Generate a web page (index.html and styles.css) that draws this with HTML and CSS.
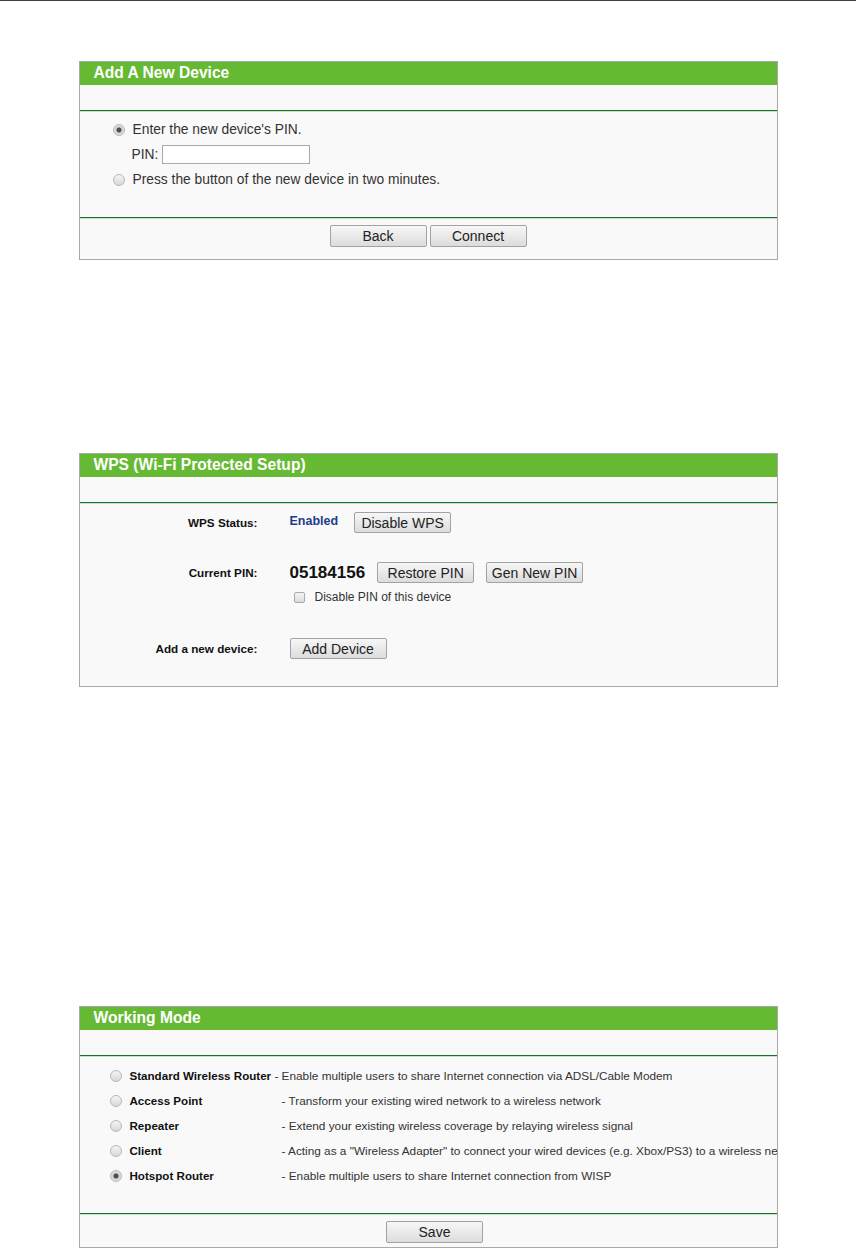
FILE: index.html
```html
<!DOCTYPE html>
<html lang="en">
<head>
  <meta charset="utf-8">
  <title>Wireless Router Setup</title>
  <link rel="stylesheet" href="styles.css">
</head>
<body>

  <section class="panel panel-add">
    <h2 class="panel-title">Add A New Device</h2>
    <div class="panel-band"></div>
    <div class="panel-body add-body">
      <label class="choice"><input class="radio" type="radio" name="method" checked>Enter the new device's PIN.</label>
      <div class="pin-row">PIN: <input class="pin-input" type="text"></div>
      <label class="choice"><input class="radio" type="radio" name="method">Press the button of the new device in two minutes.</label>
    </div>
    <div class="panel-foot">
      <button class="btn">Back</button>
      <button class="btn">Connect</button>
    </div>
  </section>

  <section class="panel panel-wps">
    <h2 class="panel-title">WPS (Wi-Fi Protected Setup)</h2>
    <div class="panel-band"></div>
    <div class="panel-body wps-body">
      <div class="field field-status">
        <span class="field-label">WPS Status:</span>
        <span class="status">Enabled</span>
        <button class="btn">Disable WPS</button>
      </div>
      <div class="field field-pin">
        <span class="field-label">Current PIN:</span>
        <span class="pin-code">05184156</span>
        <button class="btn">Restore PIN</button>
        <button class="btn">Gen New PIN</button>
      </div>
      <label class="check-row"><input class="check" type="checkbox">Disable PIN of this device</label>
      <div class="field field-add">
        <span class="field-label">Add a new device:</span>
        <button class="btn">Add Device</button>
      </div>
    </div>
  </section>

  <section class="panel panel-mode">
    <h2 class="panel-title">Working Mode</h2>
    <div class="panel-band"></div>
    <div class="panel-body mode-body">
      <label class="mode"><input class="radio" type="radio" name="mode"><b class="mode-name mode-name-free">Standard Wireless Router</b> - Enable multiple users to share Internet connection via ADSL/Cable Modem</label>
      <label class="mode"><input class="radio" type="radio" name="mode"><b class="mode-name">Access Point</b>- Transform your existing wired network to a wireless network</label>
      <label class="mode"><input class="radio" type="radio" name="mode"><b class="mode-name">Repeater</b>- Extend your existing wireless coverage by relaying wireless signal</label>
      <label class="mode"><input class="radio" type="radio" name="mode"><b class="mode-name">Client</b>- Acting as a "Wireless Adapter" to connect your wired devices (e.g. Xbox/PS3) to a wireless network</label>
      <label class="mode"><input class="radio" type="radio" name="mode" checked><b class="mode-name">Hotspot Router</b>- Enable multiple users to share Internet connection from WISP</label>
    </div>
    <div class="panel-foot panel-foot-save">
      <button class="btn">Save</button>
    </div>
  </section>

</body>
</html>
```

FILE: styles.css
```css
html, body {
  background: #fff;
}

body {
  margin: 0;
  border-top: 1px solid #404040;
  font-family: "Liberation Sans", Arial, sans-serif;
  color: #333;
}

.panel {
  box-sizing: border-box;
  width: 699px;
  margin: 0 auto;
  border: 1px solid #a9a9a9;
  background: #f9f9f9;
  overflow: hidden;
}

.panel-add {
  margin-top: 60px;
}

.panel-wps {
  margin-top: 193px;
}

.panel-mode {
  margin-top: 319px;
}

.panel-title {
  margin: 0;
  height: 23px;
  line-height: 21px;
  padding-left: 14px;
  background: #66b933;
  color: #fff;
  font-size: 15.6px;
  font-weight: bold;
}

.panel-band {
  height: 25px;
}

.panel-body,
.panel-foot {
  border-top: 1px solid #1c6f31;
  box-shadow: inset 0 1px 0 #c4e2c4;
}

/* buttons */
.btn {
  box-sizing: border-box;
  width: 97px;
  height: 22px;
  padding: 0;
  border: 1px solid #a2a2a2;
  border-radius: 2px;
  background: linear-gradient(#f7f7f7, #dcdcdc);
  color: #222;
  font-family: inherit;
  font-size: 14px;
}

.panel-foot {
  display: flex;
  justify-content: center;
  gap: 3px;
  padding: 7px 0 12px;
}

.panel-foot-save {
  padding: 7px 0 4px 13px;
}

/* radio + checkbox */
.radio {
  appearance: none;
  flex: none;
  width: 12px;
  height: 12px;
  margin: 0 7px 0 0;
  border: 1px solid #b8b8b8;
  border-radius: 50%;
  box-sizing: border-box;
  background: linear-gradient(#f5f5f5, #d8d8d8);
}

.radio:checked {
  background: radial-gradient(circle, #4d4d4d 0, #4d4d4d 2px, #cfcfcf 3px, #ececec 6px);
}

.check {
  appearance: none;
  flex: none;
  width: 11px;
  height: 11px;
  margin: 0 10px 0 0;
  border: 1px solid #a9a9a9;
  border-radius: 2px;
  box-sizing: border-box;
  background: linear-gradient(#f6f6f6, #dadada);
}

/* add a new device */
.add-body {
  padding: 6px 0 25px;
  font-size: 13.8px;
}

.choice {
  display: flex;
  align-items: center;
  height: 25px;
  padding-left: 33px;
}

.choice .radio {
  margin-right: 8px;
}

.pin-row {
  display: flex;
  align-items: center;
  height: 25px;
  padding-left: 52px;
}

.pin-input {
  box-sizing: border-box;
  width: 148px;
  height: 19px;
  margin-left: 4px;
  border: 1px solid #a9a9a9;
  background: #fff;
}

/* wps */
.wps-body {
  padding: 9px 0 27px;
}

.field {
  display: flex;
  align-items: center;
  height: 21px;
}

.field .btn {
  height: 21px;
  margin-right: 12px;
}

.field-pin {
  margin-top: 29px;
}

.field-add {
  margin-top: 34px;
}

.field-label {
  width: 178px;
  margin-right: 32px;
  text-align: right;
  font-size: 11.7px;
  font-weight: bold;
  color: #111;
}

.status {
  margin: -3px 16px 0 0;
  font-size: 12.5px;
  font-weight: bold;
  color: #1d3c8c;
}

.pin-code {
  margin-right: 12px;
  font-size: 17px;
  font-weight: bold;
  color: #111;
}

.check-row {
  display: flex;
  align-items: center;
  height: 14px;
  margin-top: 7px;
  padding-left: 214px;
  font-size: 12px;
}

/* working mode */
.mode-body {
  padding: 7px 0 25px;
  font-size: 11.8px;
}

.mode {
  display: flex;
  align-items: center;
  height: 25px;
  padding-left: 30px;
  white-space: pre;
}

.mode .radio {
  margin-right: 8px;
}

.mode-name {
  flex: none;
  width: 152px;
  font-size: 11.6px;
  color: #111;
}

.mode-name-free {
  width: auto;
}
```
